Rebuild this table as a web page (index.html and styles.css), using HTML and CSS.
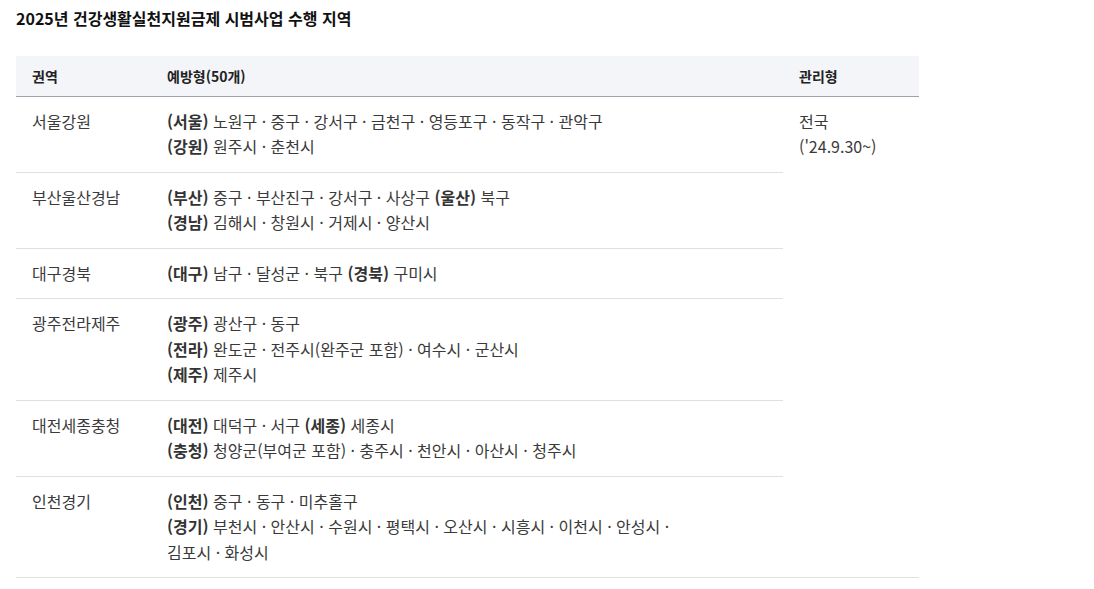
FILE: index.html
```html
<!DOCTYPE html>
<html lang="ko">
<head>
<meta charset="utf-8">
<link rel="stylesheet" href="styles.css">
</head>
<body>
<div class="page">
  <h2 class="title">2025년 건강생활실천지원금제 시범사업 수행 지역</h2>
  <table class="region-table">
    <colgroup>
      <col class="c1"><col class="c2"><col class="c3">
    </colgroup>
    <thead>
      <tr><th>권역</th><th>예방형(50개)</th><th>관리형</th></tr>
    </thead>
    <tbody>
      <tr>
        <td>서울강원</td>
        <td><b>(서울)</b> 노원구 · 중구 · 강서구 · 금천구 · 영등포구 · 동작구 · 관악구<br><b>(강원)</b> 원주시 · 춘천시</td>
        <td class="manage" rowspan="6">전국<br>('24.9.30~)</td>
      </tr>
      <tr>
        <td>부산울산경남</td>
        <td><b>(부산)</b> 중구 · 부산진구 · 강서구 · 사상구 <b>(울산)</b> 북구<br><b>(경남)</b> 김해시 · 창원시 · 거제시 · 양산시</td>
      </tr>
      <tr>
        <td>대구경북</td>
        <td><b>(대구)</b> 남구 · 달성군 · 북구 <b>(경북)</b> 구미시</td>
      </tr>
      <tr>
        <td>광주전라제주</td>
        <td><b>(광주)</b> 광산구 · 동구<br><b>(전라)</b> 완도군 · 전주시(완주군 포함) · 여수시 · 군산시<br><b>(제주)</b> 제주시</td>
      </tr>
      <tr>
        <td>대전세종충청</td>
        <td><b>(대전)</b> 대덕구 · 서구 <b>(세종)</b> 세종시<br><b>(충청)</b> 청양군(부여군 포함) · 충주시 · 천안시 · 아산시 · 청주시</td>
      </tr>
      <tr>
        <td>인천경기</td>
        <td><b>(인천)</b> 중구 · 동구 · 미추홀구<br><b>(경기)</b> 부천시 · 안산시 · 수원시 · 평택시 · 오산시 · 시흥시 · 이천시 · 안성시 ·<br>김포시 · 화성시</td>
      </tr>
    </tbody>
  </table>
</div>
</body>
</html>
```

FILE: styles.css
```css
* { box-sizing: border-box; }
body {
  margin: 0;
  background: #fff;
  font-family: "Noto Sans CJK KR", "Noto Sans", sans-serif;
  color: #3a3a3a;
}
.page {
  padding: 6px 16px;
}
.title {
  margin: 0 0 26px;
  font-size: 16px;
  line-height: 24px;
  font-weight: 700;
  color: #111;
}
.region-table {
  width: 903px;
  border-collapse: collapse;
  table-layout: fixed;
  font-size: 16px;
}
.c1 { width: 135px; }
.c2 { width: 632px; }
.c3 { width: 136px; }
.region-table th {
  background: #f3f5f9;
  height: 40px;
  padding: 0 16px;
  text-align: left;
  font-size: 14px;
  font-weight: 700;
  color: #222;
  border-bottom: 1px solid #9da3ad;
}
.region-table td {
  padding: 12px 16px;
  line-height: 25.5px;
  vertical-align: top;
  border-bottom: 1px solid #e0e0e0;
}
.region-table td b {
  font-weight: 700;
  color: #333;
}
```
